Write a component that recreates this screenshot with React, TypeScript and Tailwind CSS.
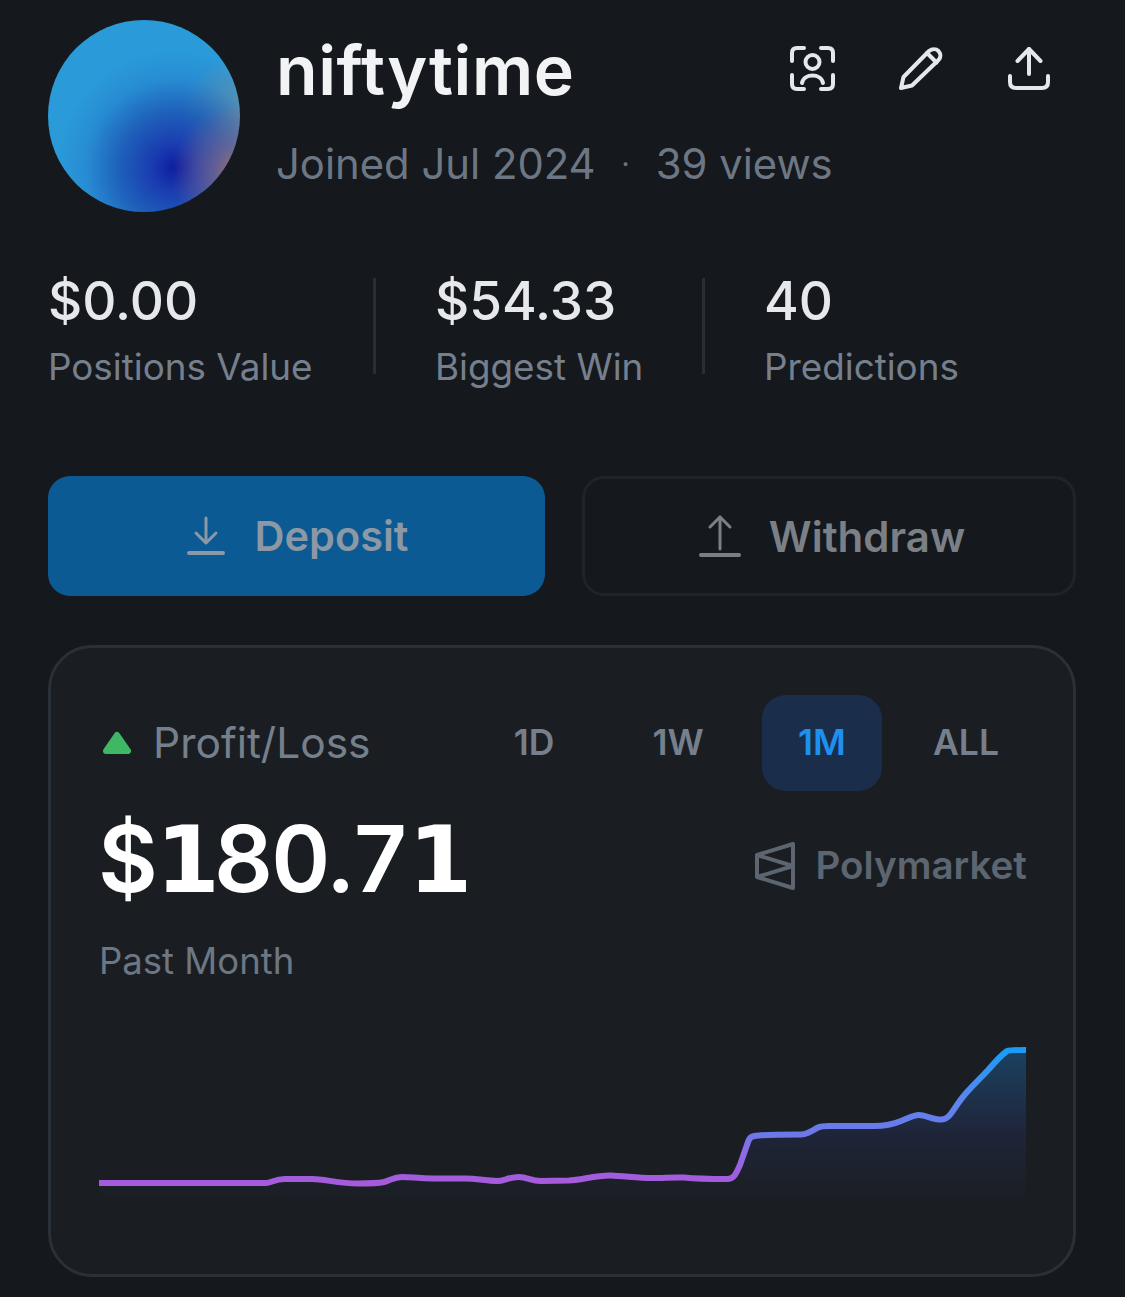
import React from 'react';

const linePath =
  'M0 143 L167 143 C172 143 176 139 186 139 L213 139 C225 139 240 143.5 259 143.5 C270 143.5 278 143.5 285 142 C292 140 295 137 303 137 C312 137 320 138.5 335 138.5 L366 138.5 C378 138.5 388 141 398 141 C405 141 410 137 420 137 C428 137 432 141 442 141 L470 140.5 C482 140 498 135 512 135.5 C525 136 540 138 552 138 C565 138 575 137 585 137.5 C595 138.5 610 139 628 139 C635 139 637 134 641 125 L649 102 C651 96 654 96 660 95.5 C668 94.5 690 94.5 702 94.5 C708 94.5 714 90 719 87.5 C723 85.5 727 86 735 86 L775 86 C785 86 795 84 802 81 C810 78 814 75 820 75 C826 75 834 79.5 842 79.5 C850 79.5 853 72 860 62 C868 50 880 40 890 29 C896 22 904 14 908 11 C911 10 915 10 927 10';

function Chart() {
  return (
    <svg width="927" height="160" viewBox="0 0 927 160" className="block">
      <defs>
        <linearGradient id="stroke" gradientUnits="userSpaceOnUse" x1="0" y1="143" x2="0" y2="10">
          <stop offset="0" stopColor="#a75adb" />
          <stop offset="0.25" stopColor="#8a6ce8" />
          <stop offset="0.37" stopColor="#6b78ea" />
          <stop offset="0.6" stopColor="#5f84ec" />
          <stop offset="1" stopColor="#1a9cf6" />
        </linearGradient>
        <linearGradient id="area" gradientUnits="userSpaceOnUse" x1="0" y1="10" x2="0" y2="160">
          <stop offset="0" stopColor="#1a4262" />
          <stop offset="0.55" stopColor="#1f2539" />
          <stop offset="1" stopColor="#1a1e23" />
        </linearGradient>
      </defs>
      <path d={`${linePath} L927 160 L0 160 Z`} fill="url(#area)" />
      <path d={linePath} fill="none" stroke="url(#stroke)" strokeWidth="6" strokeLinejoin="round" />
    </svg>
  );
}

function ScanIcon() {
  return (
    <svg width="48" height="48" viewBox="0 0 48 48" fill="none" stroke="#e4e7eb" strokeWidth="4" strokeLinecap="round" strokeLinejoin="round">
      <path d="M3 16 V8 Q3 3 8 3 H15" />
      <path d="M32 3 H39 Q44 3 44 8 V16" />
      <path d="M3 30 V39 Q3 44 8 44 H15" />
      <path d="M32 44 H39 Q44 44 44 39 V30" />
      <circle cx="23.5" cy="17" r="7" />
      <path d="M13 38 C15 28 32 28 34 38" />
    </svg>
  );
}

function PenIcon() {
  return (
    <svg width="48" height="48" viewBox="0 0 48 48" fill="none" stroke="#e4e7eb" strokeWidth="4" strokeLinecap="round" strokeLinejoin="round">
      <path d="M4 43 L6.5 32 L32 6 C35 3.5 39 3.5 41.5 6 C44 9 44 12.5 41.5 15 L15 40.5 Z" />
      <path d="M30 8 L39.5 17.5" />
    </svg>
  );
}

function ShareIcon() {
  return (
    <svg width="48" height="48" viewBox="0 0 48 48" fill="none" stroke="#e4e7eb" strokeWidth="4" strokeLinecap="round" strokeLinejoin="round">
      <path d="M24 4 V29" />
      <path d="M12.5 16 L24 4 L35.5 16" />
      <path d="M5 31 V37 Q5 43 11 43 H37 Q43 43 43 37 V31" />
    </svg>
  );
}

function PolymarketLogo() {
  return (
    <svg width="40" height="50" viewBox="0 0 40 50" fill="none" stroke="#5c6570" strokeWidth="4" strokeLinejoin="round">
      <path d="M2 14 L38 3 V47 L2 36 Z" />
      <path d="M2 14 L38 25 L2 36" />
    </svg>
  );
}

function Stat({ value, label, className }: { value: string; label: string; className: string }) {
  return (
    <div className={className}>
      <div className="text-[53px] leading-[46px] font-medium text-[#e6e8ec]">{value}</div>
      <div className="mt-[21px] text-[36.8px] leading-[44px] text-[#76808d]">{label}</div>
    </div>
  );
}

// footed "1", Inter's one has no base
function One() {
  return <span className="font-['DejaVu_Sans',sans-serif] font-bold tracking-[-6px]">1</span>;
}

export default function App() {
  return (
    <div className="w-[1125px] h-[1297px] overflow-hidden bg-[#15181d] px-[48px] pt-[20px] font-['Inter',sans-serif]">
      {/* Profile header */}
      <div className="flex">
        <div className="w-[192px] h-[192px] shrink-0 rounded-full bg-[radial-gradient(circle_at_100%_80%,rgba(176,110,102,0.95)_0%,rgba(150,105,125,0.55)_11%,rgba(42,154,217,0)_28%),radial-gradient(circle_at_66%_77%,#0d1ca0_0%,#1a3cb0_12%,rgba(28,85,180,0.85)_28%,rgba(35,120,200,0.4)_46%,rgba(42,154,217,0)_60%),radial-gradient(circle_at_100%_50%,#7f9a9c_0%,rgba(42,154,217,0)_28%),linear-gradient(#2a9ad9,#2a9ad9)]" />
        <div className="ml-[36px] flex-1 relative">
          <div className="mt-[15px] text-[68px] leading-[70px] font-semibold tracking-[0.6px] text-[#f2f3f5]">niftytime</div>
          <div className="mt-[34px] flex items-center text-[41.8px] leading-[50px] text-[#6d7784]">
            <span>Joined Jul 2024</span>
            <span className="mx-[26px] text-[28px]">·</span>
            <span>39 views</span>
          </div>
          <div className="absolute right-[24px] top-[25px] flex gap-[60px]">
            <ScanIcon />
            <PenIcon />
            <ShareIcon />
          </div>
        </div>
      </div>

      {/* Stats */}
      <div className="mt-[66px] flex h-[116px] items-start">
        <Stat value="$0.00" label="Positions Value" className="w-[328px] border-r-[3px] border-[#2a2f37] h-[96px] whitespace-nowrap" />
        <Stat value="$54.33" label="Biggest Win" className="w-[329px] pl-[59px] border-r-[3px] border-[#2a2f37] h-[96px] whitespace-nowrap" />
        <Stat value="40" label="Predictions" className="pl-[59px] h-[96px] whitespace-nowrap" />
      </div>

      {/* Deposit / withdraw */}
      <div className="mt-[82px] flex gap-[37px]">
        <button className="flex h-[120px] w-[497px] items-center justify-center gap-[30px] rounded-[22px] bg-[#0b5a94] pl-[2px] text-[41.5px] font-semibold text-[#8c98a3]">
          <svg width="38" height="40" viewBox="0 0 38 40" fill="none" stroke="#8c98a3" strokeWidth="3" strokeLinecap="round" strokeLinejoin="round">
            <path d="M19 2 V26" />
            <path d="M9 17 L19 27 L29 17" />
            <path d="M2 37 H36" strokeWidth="4" />
          </svg>
          Deposit
        </button>
        <button className="flex h-[120px] w-[494px] items-center justify-center gap-[28px] rounded-[22px] border-[3px] border-[#20242a] pl-[6px] text-[42px] font-semibold text-[#7b8087]">
          <svg width="42" height="44" viewBox="0 0 42 44" fill="none" stroke="#7b8087" strokeWidth="3" strokeLinecap="round" strokeLinejoin="round">
            <path d="M21 3 V35" />
            <path d="M11 13 L21 3 L31 13" />
            <path d="M2 41 H40" strokeWidth="4" />
          </svg>
          Withdraw
        </button>
      </div>

      {/* Profit / loss card */}
      <div className="mt-[49px] h-[632px] w-[1028px] rounded-[44px] border-[3px] border-[#2a3038] bg-[#1a1e23] pl-[48px] pr-[47px] pt-[47px]">
        <div className="flex h-[96px] items-center">
          <svg width="30" height="24" viewBox="0 0 30 24" className="ml-[3px]">
            <path d="M15 4 L26 20 H4 Z" fill="#3fb866" stroke="#3fb866" strokeWidth="6" strokeLinejoin="round" />
          </svg>
          <span className="ml-[21px] text-[42.5px] text-[#76808d]">Profit/Loss</span>
          <div className="ml-auto flex gap-[24px] text-[35.5px] font-semibold text-[#76808d]">
            <div className="flex h-[96px] w-[120px] items-center justify-center">1D</div>
            <div className="flex h-[96px] w-[120px] items-center justify-center">1W</div>
            <div className="flex h-[96px] w-[120px] items-center justify-center rounded-[24px] bg-[#1a2e4c] text-[#1d90f0]">1M</div>
            <div className="flex h-[96px] w-[120px] items-center justify-center">ALL</div>
          </div>
        </div>
        <div className="mt-[25px] flex h-[88px] items-center justify-between">
          <span className="-ml-[1px] text-[92px] font-semibold tabular-nums tracking-[-2.2px] text-white">
            $<One />80.7<One />
          </span>
          <div className="mt-[12px] -mr-[1px] flex items-center gap-[20px] text-[38.6px] font-semibold text-[#5c6570]">
            <PolymarketLogo />
            Polymarket
          </div>
        </div>
        <div className="mt-[35px] text-[36.5px] leading-[44px] text-[#6d7784]">Past Month</div>
        <div className="mt-[57px]">
          <Chart />
        </div>
      </div>
    </div>
  );
}
